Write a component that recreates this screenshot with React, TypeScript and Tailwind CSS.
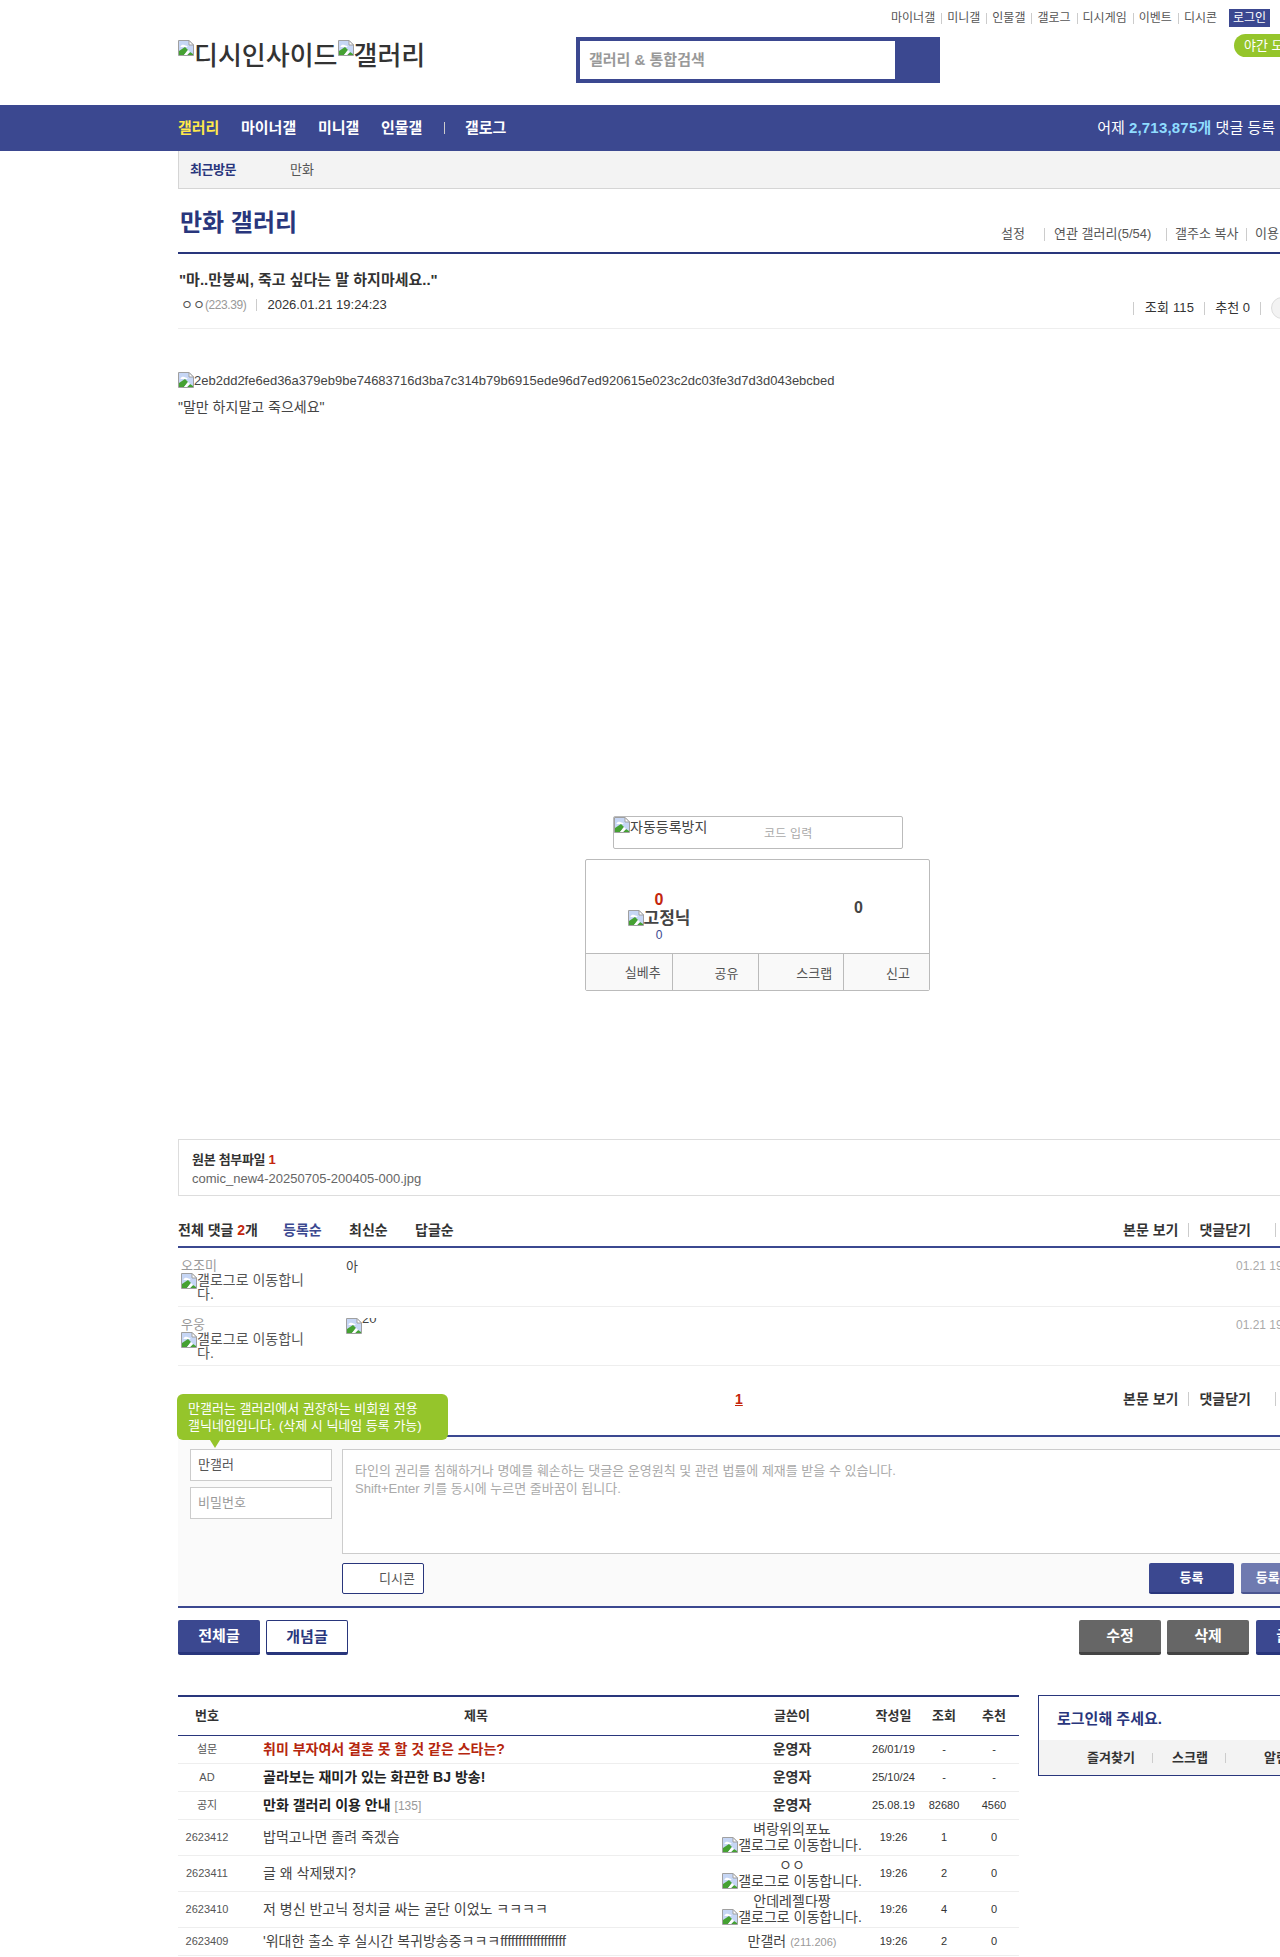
const FONT = "font-['Liberation_Sans','Noto_Sans_CJK_KR',sans-serif]";

// chrome's broken image placeholder
const Broken = ({ className = "" }: { className?: string }) => (
  <svg width="16" height="16" viewBox="0 0 16 16" className={`inline-block shrink-0 align-top ${className}`}>
    <path d="M0.5 0.5H11L15.5 5V15.5H0.5Z" fill="#c6d6f5" stroke="#a0a0a0" />
    <path d="M11 0.5V5H15.5Z" fill="#fff" stroke="#a0a0a0" />
    <path d="M2.5 6.5C3 4.5 6 4 7.5 5.5C9 5.5 9.5 6.5 9.5 7H2.5Z" fill="#fff" />
    <path d="M1 15V11L7 7L10 10L6 15Z" fill="#45a132" />
    <path d="M9 15L12 12L15 14V15Z" fill="#45a132" />
    <path d="M6 15L10 10L12 12L9 15Z" fill="#fff" />
  </svg>
);

const Sep = ({ className = "h-[11px] ml-[6px] mr-[5px]" }: { className?: string }) => (
  <span className={`w-px bg-[#ccc] inline-block shrink-0 ${className}`} />
);

const rows = [
  { no: "설문", title: "취미 부자여서 결혼 못 할 것 같은 스타는?", writer: "운영자", date: "26/01/19", view: "-", rec: "-", kind: "survey" },
  { no: "AD", title: "골라보는 재미가 있는 화끈한 BJ 방송!", writer: "운영자", date: "25/10/24", view: "-", rec: "-", kind: "bold" },
  { no: "공지", title: "만화 갤러리 이용 안내", count: "[135]", writer: "운영자", date: "25.08.19", view: "82680", rec: "4560", kind: "bold" },
  { no: "2623412", title: "밥먹고나면 졸려 죽겠슴", writer: "벼랑위의포뇨", date: "19:26", view: "1", rec: "0", kind: "fix" },
  { no: "2623411", title: "글 왜 삭제됐지?", writer: "ㅇㅇ", date: "19:26", view: "2", rec: "0", kind: "fix" },
  { no: "2623410", title: "저 병신 반고닉 정치글 싸는 굴단 이었노 ㅋㅋㅋㅋ", writer: "안데레젤다짱", date: "19:26", view: "4", rec: "0", kind: "fix" },
  { no: "2623409", title: "'위대한 출소 후 실시간 복귀방송중ㅋㅋㅋffffffffffffffffff", writer: "만갤러", ip: "(211.206)", date: "19:26", view: "2", rec: "0", kind: "ip" },
];

const CommentTools = () => (
  <div className="flex items-center text-[14px] leading-[18px] font-bold text-[#333] whitespace-nowrap">
    <span>본문 보기</span>
    <Sep className="h-[14px] mx-[10px]" />
    <span>댓글닫기</span>
    <Sep className="h-[14px] ml-[24px]" />
  </div>
);

const App = () => {
  return (
    <div className={`w-[1280px] h-[1957px] overflow-hidden bg-white text-[#333] ${FONT}`}>
      {/* header */}
      <div className="flex h-[105px] pl-[178px]">
        <div className="w-[398px] pt-[40px] text-[26px] leading-[32px] font-medium text-[#333] whitespace-nowrap">
          <Broken />디시인사이드<Broken />갤러리
        </div>
        <div className="w-[364px] h-[46px] mt-[37px] bg-[#3b4890] pl-[4px] py-[4px]">
          <div className="w-[315px] h-[38px] bg-white pl-[9px] leading-[38px] text-[15px] font-bold text-[#999]">
            갤러리 &amp; 통합검색
          </div>
        </div>
        <div className="flex-1 min-w-0 flex flex-col">
          <div className="flex items-center justify-end h-[18px] mt-[9px] pr-[10px] text-[12px] text-[#555] whitespace-nowrap">
            <span>마이너갤</span><Sep /><span>미니갤</span><Sep /><span>인물갤</span><Sep /><span>갤로그</span><Sep /><span>디시게임</span><Sep /><span>이벤트</span><Sep /><span>디시콘</span>
            <span className="ml-[12px] w-[41px] shrink-0 h-[18px] bg-[#3b4890] text-white text-center leading-[18px]">로그인</span>
          </div>
          <div className="mt-[7px] ml-[294px] w-[80px] h-[23px] rounded-l-[12px] bg-[#95c52b] text-white text-[13px] leading-[23px] pl-[10px] whitespace-nowrap">
            야간 모드
          </div>
        </div>
      </div>

      {/* nav */}
      <div className="h-[46px] bg-[#3b4890] flex items-center pl-[178px] pr-[5px] text-white text-[15px] font-bold whitespace-nowrap">
        <span className="text-[#ffe94a] w-[63px]">갤러리</span>
        <span className="w-[77px]">마이너갤</span>
        <span className="w-[63px]">미니갤</span>
        <span className="w-[63px]">인물갤</span>
        <Sep className="h-[12px] bg-[#5a66a8] mr-[20px]" />
        <span>갤로그</span>
        <span className="ml-auto font-normal text-[15px]">
          어제 <b className="text-[#8fdcff] tracking-[0.2px]">2,713,875개</b> 댓글 등록
        </span>
      </div>

      <div className="pl-[178px]">
        <div className="w-[1160px]">
          {/* recent */}
          <div className="h-[38px] bg-[#f3f3f3] border-l border-b border-[#d5d5d5] flex items-center pl-[11px] text-[13px]">
            <span className="font-bold text-[#29367c] w-[100px] tracking-[-0.5px]">최근방문</span>
            <span className="text-[#555]">만화</span>
          </div>

          {/* title */}
          <div className="h-[65px] border-b-2 border-[#29367c] flex items-end pb-[10px] text-[13px] leading-[16px] text-[#555] whitespace-nowrap">
            <h1 className="ml-[2px] mb-[3px] text-[24px] leading-[32px] font-bold text-[#29367c] w-[821px]">만화 갤러리</h1>
            <span className="w-[43px]">설정</span>
            <Sep className="h-[13px] mr-[9px] mb-[1px]" />
            <span className="w-[112px]">연관 갤러리(5/54)</span>
            <Sep className="h-[13px] mr-[8px] mb-[1px]" />
            <span className="w-[71px]">갤주소 복사</span>
            <Sep className="h-[13px] mr-[8px] mb-[1px]" />
            <span>이용 안내</span>
          </div>

          {/* post head */}
          <div className="h-[75px] border-b border-[#eee] pl-[1px]">
            <div className="pt-[16px] text-[15px] leading-[20px] font-bold text-[#333]">"마..만붕씨, 죽고 싶다는 말 하지마세요.."</div>
            <div className="flex items-start mt-[7px] pr-[27px] text-[13px] leading-[16px]">
              <span className="ml-[2px] text-[#555]">ㅇㅇ</span>
              <span className="text-[12px] text-[#999] tracking-[-0.4px]">(223.39)</span>
              <Sep className="h-[12px] mx-[10px] mt-[2px]" />
              <span>2026.01.21 19:24:23</span>
              <div className="flex items-center ml-auto whitespace-nowrap">
                <Sep className="h-[13px] mr-[11px]" />
                <span className="tracking-[0.2px]">조회 115</span>
                <Sep className="h-[13px] mx-[10px]" />
                <span>추천 0</span>
                <Sep className="h-[13px] mx-[10px]" />
                <span className="w-[40px] h-[22px] rounded-full border border-[#ddd] bg-[#f3f3f3]" />
              </div>
            </div>
          </div>

          {/* body */}
          <div className="h-[810px] relative text-[13px]">
            <div className="pt-[44px] flex items-center h-[60px] text-[#444] leading-[16px]">
              <Broken className="-mt-[3px]" />2eb2dd2fe6ed36a379eb9be74683716d3ba7c314b79b6915ede96d7ed920615e023c2dc03fe3d7d3d043ebcbed
            </div>
            <div className="mt-[10px] text-[14px] text-[#444] leading-[16px]">"말만 하지말고 죽으세요"</div>

            {/* captcha */}
            <div className="ml-[435px] mt-[401px] w-[290px] h-[33px] border border-[#bbb] rounded-[2px] flex text-[12px] leading-[14px]">
              <div className="w-[150px] text-[14px] leading-[16px] text-[#444] flex"><Broken /><span className="pt-[2px]">자동등록방지</span></div>
              <div className="pt-[10px] text-[#aaa] tracking-[0.2px]">코드 입력</div>
            </div>

            {/* vote */}
            <div className="ml-[407px] mt-[10px] w-[345px] h-[132px] border border-[#bbb] rounded-[2px] flex flex-col">
              <div className="h-[93px] flex">
                <div className="w-[145px] flex flex-col items-center pt-[30px] pl-[1px]">
                  <span className="text-[16px] leading-[20px] font-bold text-[#c4260d]">0</span>
                  <span className="flex text-[17px] leading-[17px] font-bold text-[#444]"><Broken />고정닉</span>
                  <span className="text-[12px] leading-[14px] mt-[1px] text-[#3b4890]">0</span>
                </div>
                <div className="flex-1 pt-[38px] pl-[123px] text-[16px] leading-[20px] font-bold text-[#444]">0</div>
              </div>
              <div className="flex-1 grid grid-cols-4 border-t border-[#bbb] bg-[#f9f9f9] text-[13px] text-[#555] text-right">
                <div className="pr-[11px] pt-[12px] leading-[14px]">실베추</div>
                <div className="border-l border-[#bbb] pr-[19px] pt-[13px] leading-[14px]">공유</div>
                <div className="border-l border-[#bbb] pr-[11px] pt-[13px] leading-[14px]">스크랩</div>
                <div className="border-l border-[#bbb] pr-[19px] pt-[13px] leading-[14px]">신고</div>
              </div>
            </div>
          </div>

          {/* attachment */}
          <div className="h-[57px] border border-[#ddd] pl-[13px] pt-[10px] text-[13px] leading-[19px]">
            <div className="font-bold tracking-[-0.3px]">원본 첨부파일 <span className="text-[#c4260d]">1</span></div>
            <div className="text-[#666]">comic_new4-20250705-200405-000.jpg</div>
          </div>

          {/* comments */}
          <div className="h-[52px] flex items-end pb-[7px] border-b-2 border-[#3b4890] text-[14px] leading-[18px] font-bold">
            <span className="w-[105px]">전체 댓글 <span className="text-[#c4260d]">2</span>개</span>
            <span className="w-[66px] text-[#3b4890]">등록순</span>
            <span className="w-[66px]">최신순</span>
            <span className="w-[708px]">답글순</span>
            <CommentTools />
          </div>
          {[
            { name: "오조미", body: <span className="inline-block pt-[1px] text-[13px] text-[#444]">아</span> },
            { name: "우웅", body: <span className="flex text-[13px] leading-[16px] h-[16px] overflow-hidden text-[#444]"><Broken /><span className="-mt-[7px]">20</span></span> },
          ].map((c) => (
            <div key={c.name} className="h-[59px] border-b border-[#eee] flex pt-[11px] text-[13px] leading-[14px]">
              <div className="ml-[3px] w-[165px]">
                <div className="text-[#999] leading-[14px]">{c.name}</div>
                <div className="flex text-[14px] text-[#555]"><Broken /><span className="w-[110px]">갤로그로 이동합니다.</span></div>
              </div>
              <div className="w-[890px]">{c.body}</div>
              <div className="text-[12px] text-[#aaa] whitespace-nowrap">01.21 19:24:23</div>
            </div>
          ))}

          {/* comment bottom + tooltip */}
          <div className="h-[71px] relative flex items-start pt-[24px] border-b-2 border-[#3b4890]">
            <div className="absolute left-[-1px] top-[28px] w-[271px] h-[46px] z-10 bg-[#95c52b] rounded-[6px] text-white text-[13px] leading-[17px] pl-[11px] pt-[6px] whitespace-nowrap">
              만갤러는 갤러리에서 권장하는 비회원 전용<br />갤닉네임입니다. (삭제 시 닉네임 등록 가능)
              <span className="absolute left-[33px] bottom-[-8px] border-x-[5px] border-t-[8px] border-x-transparent border-t-[#95c52b]" />
            </div>
            <span className="ml-[557px] w-[388px] text-[14px] leading-[18px] font-bold text-[#c4260d] underline">1</span>
            <CommentTools />
          </div>

          {/* write form */}
          <div className="h-[171px] bg-[#fafafa] border-b-2 border-[#3b4890] pl-[12px] pt-[12px] flex text-[13px]">
            <div className="w-[142px] mr-[10px] flex flex-col gap-[6px]">
              <div className="h-[32px] bg-white border border-[#ccc] pl-[7px] leading-[30px] text-[#555]">만갤러</div>
              <div className="h-[32px] bg-white border border-[#ccc] pl-[7px] leading-[30px] text-[#999]">비밀번호</div>
            </div>
            <div className="flex-1">
              <div className="h-[105px] bg-white border border-[#ccc] pl-[12px] pt-[12px] leading-[18px] text-[#aaa]">
                타인의 권리를 침해하거나 명예를 훼손하는 댓글은 운영원칙 및 관련 법률에 제재를 받을 수 있습니다.<br />
                Shift+Enter 키를 동시에 누르면 줄바꿈이 됩니다.
              </div>
              <div className="flex mt-[9px]">
                <div className="w-[82px] h-[31px] bg-white border border-[#29367c] rounded-[2px] text-right pr-[8px] leading-[29px] text-[#555]">디시콘</div>
                <div className="ml-[725px] w-[85px] h-[31px] bg-[#3b4890] border-b-2 border-[#29367c] rounded-[2px] text-white font-bold text-center leading-[29px]">등록</div>
                <div className="ml-[7px] w-[85px] h-[31px] bg-[#6f7ab0] border-b-2 border-[#4a5590] rounded-[2px] text-white font-bold text-center leading-[29px] shrink-0">등록+추천</div>
              </div>
            </div>
          </div>

          {/* list buttons */}
          <div className="flex mt-[12px] gap-[6px] text-[15px] font-bold h-[35px] leading-[31px] text-center">
            <div className="w-[82px] bg-[#3b4890] border-b-[3px] border-[#29367c] rounded-[2px] text-white">전체글</div>
            <div className="w-[82px] bg-white border border-b-[3px] border-[#29367c] rounded-[2px] text-[#29367c]">개념글</div>
            <div className="w-[82px] ml-[725px] bg-[#666] border-b-[3px] border-[#444] rounded-[2px] text-white">수정</div>
            <div className="w-[82px] bg-[#666] border-b-[3px] border-[#444] rounded-[2px] text-white">삭제</div>
            <div className="w-[82px] ml-[1px] bg-[#3b4890] border-b-[3px] border-[#29367c] rounded-[2px] text-white">글쓰기</div>
          </div>

          {/* list + login */}
          <div className="flex mt-[40px] items-start">
            <table className="w-[841px] table-fixed border-t-2 border-[#29367c] text-[11px] text-[#333]">
              <colgroup>
                <col className="w-[58px]" />
                <col className="w-[480px]" />
                <col className="w-[152px]" />
                <col className="w-[51px]" />
                <col className="w-[50px]" />
                <col className="w-[50px]" />
              </colgroup>
              <thead>
                <tr className="h-[39px] border-b border-[#29367c] text-[13px] font-bold text-center">
                  <th>번호</th>
                  <th>제목</th>
                  <th>글쓴이</th>
                  <th>작성일</th>
                  <th>조회</th>
                  <th>추천</th>
                </tr>
              </thead>
              <tbody>
                {rows.map((r) => (
                  <tr key={r.no} className={`border-b border-[#eee] text-center ${r.kind === "fix" ? "h-[36px]" : "h-[28px]"}`}>
                    <td className="text-[#555]">{r.no}</td>
                    <td className={`text-left pl-[27px] text-[14px] whitespace-nowrap overflow-hidden ${r.kind === "survey" ? "font-bold text-[#b5260d]" : r.kind === "bold" ? "font-bold text-[#222]" : "text-[#444]"}`}>
                      {r.title}
                      {r.count && <span className="ml-[4px] text-[12px] font-normal text-[#999]">{r.count}</span>}
                    </td>
                    <td className={`text-[14px] leading-[16px] whitespace-nowrap ${r.kind === "survey" || r.kind === "bold" ? "font-bold" : "text-[#444]"}`}>
                      {r.writer}
                      {r.ip && <span className="ml-[4px] text-[11px] text-[#999]">{r.ip}</span>}
                      {r.kind === "fix" && (
                        <div className="flex justify-center whitespace-nowrap"><Broken />갤로그로 이동합니다.</div>
                      )}
                    </td>
                    <td>{r.date}</td>
                    <td>{r.view}</td>
                    <td>{r.rec}</td>
                  </tr>
                ))}
              </tbody>
            </table>
            <div className="ml-[19px] w-[300px] h-[81px] border border-[#29367c] flex flex-col">
              <div className="h-[44px] pl-[18px] pt-[14px] leading-[18px] text-[15px] font-bold text-[#29367c]">로그인해 주세요.</div>
              <div className="flex-1 bg-[#f3f3f3] flex items-center pl-[48px] text-[13px] font-bold text-[#333] whitespace-nowrap">
                <span className="w-[65px]">즐겨찾기</span>
                <Sep className="h-[10px] mr-[19px]" />
                <span className="w-[53px]">스크랩</span>
                <Sep className="h-[10px] mr-[38px]" />
                <span>알림</span>
              </div>
            </div>
          </div>
        </div>
      </div>
    </div>
  );
};

export default App;
